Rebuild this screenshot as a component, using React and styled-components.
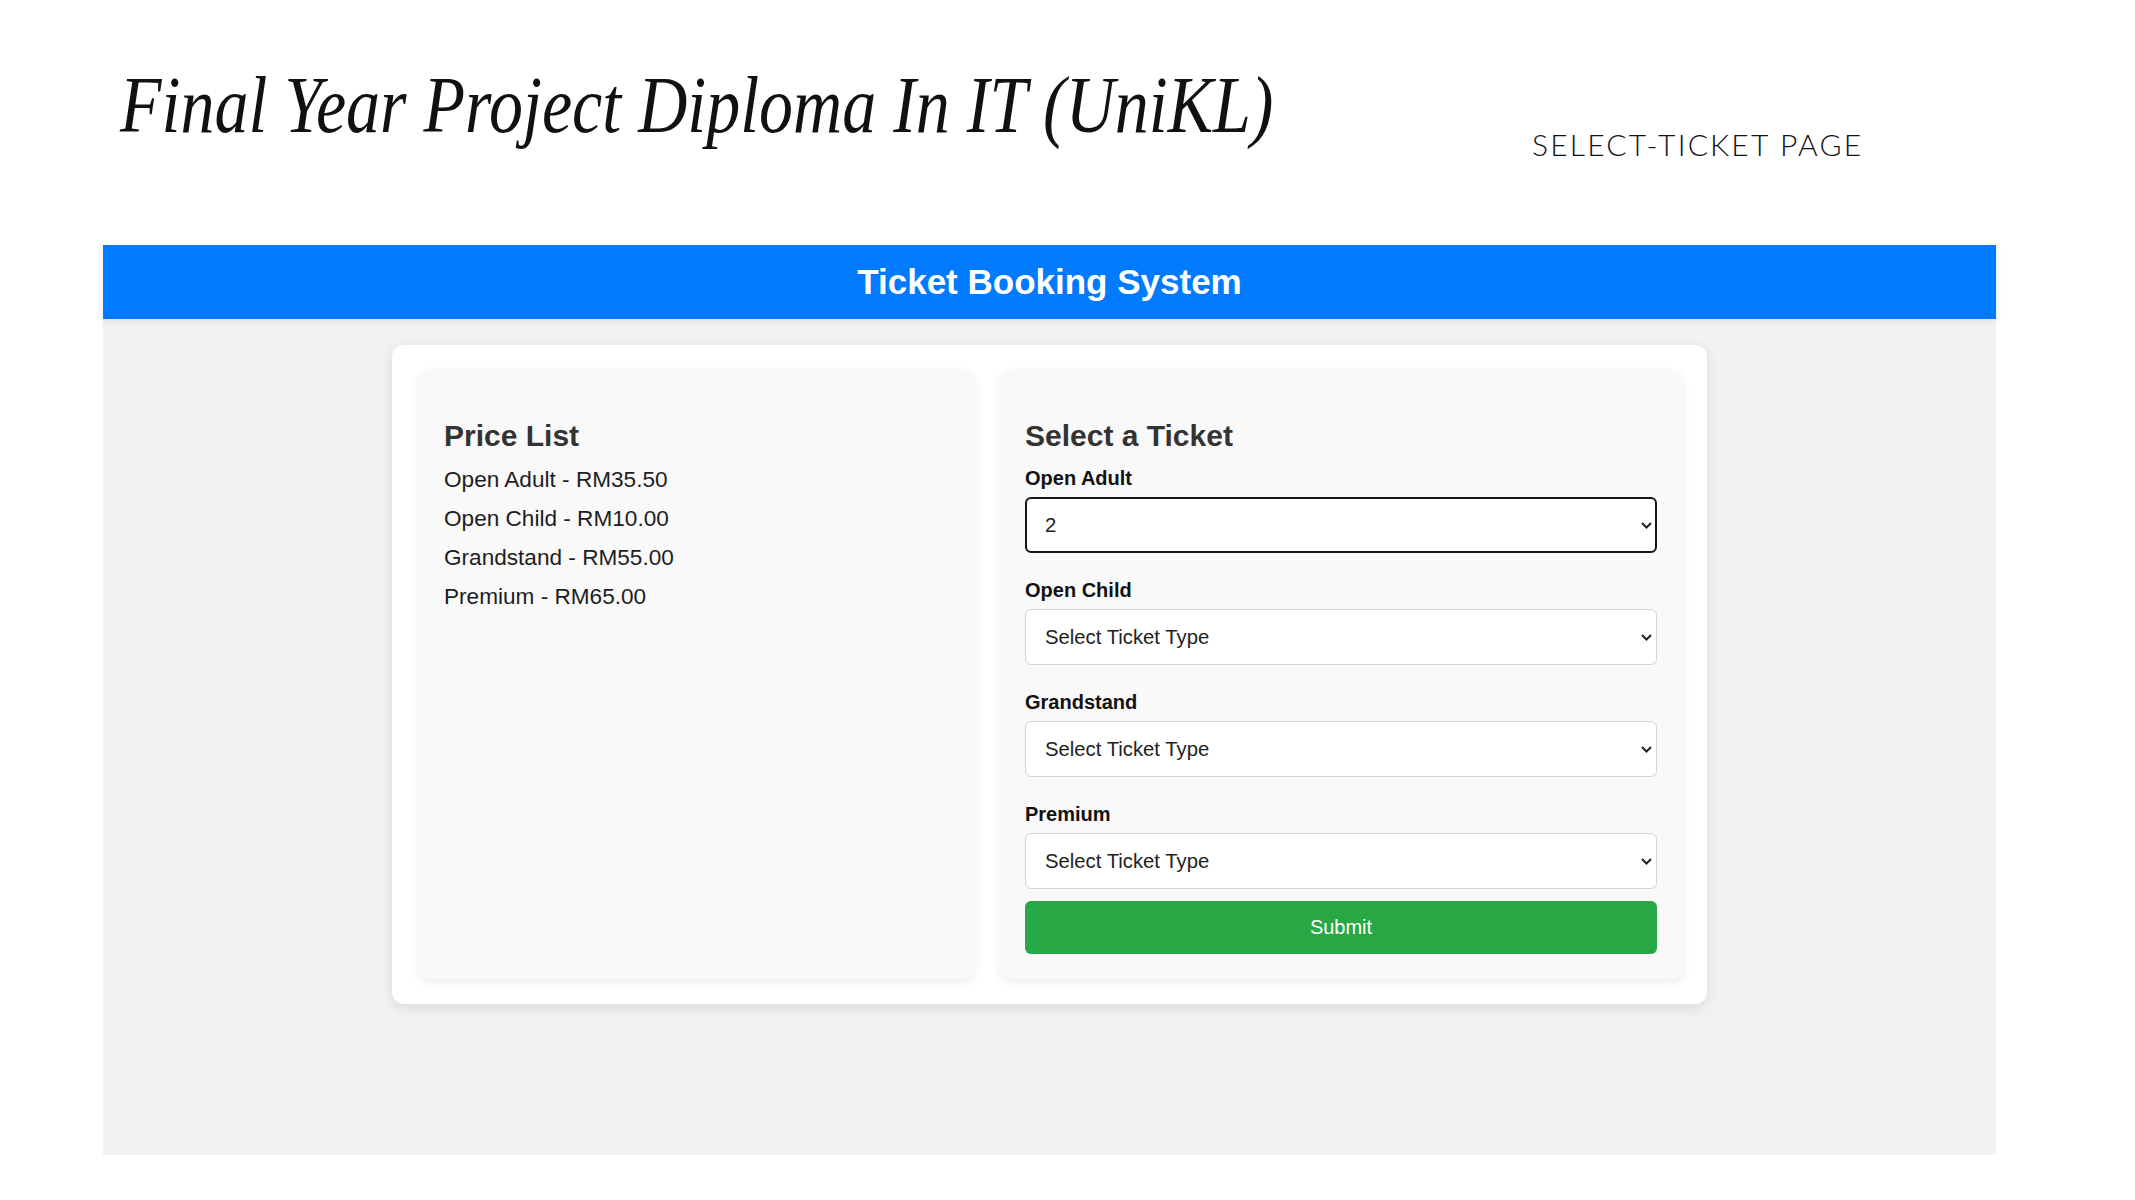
import styled, { createGlobalStyle } from "styled-components";

const GlobalStyle = createGlobalStyle`
    * {
        box-sizing: border-box;
    }

    body {
        margin: 0;
        background-color: #ffffff;
        font-family: "Liberation Sans", Arial, sans-serif;
    }
`;

const Slide = styled.div`
    width: 2135px;
    height: 1200px;
    padding: 0 139px 0 103px;
    display: flex;
    flex-direction: column;
`;

const TitleRow = styled.div`
    display: grid;
    grid-template-columns: 1412px auto;
    padding: 65px 0 0 17px;
    height: 245px;
`;

const Title = styled.h1`
    margin: 0;
    font-family: "Liberation Serif", "Times New Roman", serif;
    font-style: italic;
    font-weight: 400;
    font-size: 80px;
    line-height: 80px;
    color: #111;
    white-space: nowrap;
    transform: scaleX(0.85);
    transform-origin: left center;
`;

const PageName = styled.span`
    margin-top: 64px;
    font-family: Lato, "Open Sans", sans-serif;
    font-weight: 300;
    font-size: 30px;
    line-height: 30px;
    letter-spacing: 2.2px;
    color: #111;
    white-space: nowrap;
`;

const Browser = styled.div`
    flex: 1;
    margin-bottom: 45px;
    background-color: #f2f2f2;
    display: flex;
    flex-direction: column;
`;

const TopBar = styled.header`
    height: 74px;
    background-color: #007bff;
    color: #fff;
    display: flex;
    align-items: center;
    justify-content: center;
    font-size: 35px;
    font-weight: 700;
    box-shadow: 0 2px 8px rgba(0, 0, 0, 0.08);
`;

const Card = styled.div`
    align-self: center;
    margin-top: 26px;
    display: grid;
    grid-template-columns: 557px 684px;
    gap: 24px;
    padding: 25px 24px 25px 26px;
    background-color: #fff;
    border-radius: 12px;
    box-shadow: 0 4px 14px rgba(0, 0, 0, 0.1);
`;

const Panel = styled.section`
    height: 609px;
    padding: 26px 26px 25px;
    background-color: #f9f9f9;
    border-radius: 12px;
    box-shadow: 0 3px 10px rgba(0, 0, 0, 0.08);
    display: flex;
    flex-direction: column;
`;

const PanelTitle = styled.h2`
    margin: 23px 0 0;
    font-size: 30px;
    line-height: 34.5px;
    font-weight: 700;
    color: #333;
`;

const PriceList = styled.ul`
    list-style: none;
    margin: 6px 0 0;
    padding: 0;

    li {
        font-size: 22.6px;
        line-height: 39px;
        color: #1e1e1e;
    }
`;

const Field = styled.div`
    margin-top: ${(p) => (p.$first ? "13px" : "26px")};
    display: flex;
    flex-direction: column;
`;

const Label = styled.label`
    font-size: 20px;
    line-height: 23px;
    font-weight: 700;
    color: #111;
`;

const SelectWrap = styled.div`
    position: relative;
    margin-top: 7px;

    svg {
        position: absolute;
        right: 5px;
        top: 50%;
        margin-top: -3px;
        pointer-events: none;
    }
`;

const Select = styled.select`
    width: 100%;
    height: 56px;
    appearance: none;
    padding: 0 40px 0 ${(p) => (p.$active ? "18px" : "19px")};
    font-family: "Liberation Sans", Arial, sans-serif;
    font-size: 20.3px;
    color: #222;
    background-color: #fff;
    border: ${(p) => (p.$active ? "2px solid #161616" : "1px solid #d4d4d4")};
    border-radius: 6px;
    outline: none;
`;

const SubmitButton = styled.button`
    margin-top: 12px;
    height: 53px;
    width: 100%;
    border: none;
    border-radius: 6px;
    background-color: #28a745;
    color: #fff;
    font-family: "Liberation Sans", Arial, sans-serif;
    font-size: 20px;
`;

const prices = [
    "Open Adult - RM35.50",
    "Open Child - RM10.00",
    "Grandstand - RM55.00",
    "Premium - RM65.00",
];

const fields = [
    { name: "Open Adult", value: "2" },
    { name: "Open Child", value: "" },
    { name: "Grandstand", value: "" },
    { name: "Premium", value: "" },
];

function Chevron() {
    return (
        <svg width="11" height="7" viewBox="0 0 11 7">
            <polyline points="1,1 5.5,5.5 10,1" fill="none" stroke="#222" strokeWidth="2" />
        </svg>
    );
}

export default function App() {
    return (
        <>
            <GlobalStyle />
            <Slide>
                <TitleRow>
                    <Title>Final Year Project Diploma In IT (UniKL)</Title>
                    <PageName>SELECT-TICKET PAGE</PageName>
                </TitleRow>

                <Browser>
                    <TopBar>Ticket Booking System</TopBar>

                    <Card>
                        <Panel>
                            <PanelTitle>Price List</PanelTitle>
                            <PriceList>
                                {prices.map((p) => (
                                    <li key={p}>{p}</li>
                                ))}
                            </PriceList>
                        </Panel>

                        <Panel>
                            <PanelTitle>Select a Ticket</PanelTitle>
                            {fields.map((f, i) => (
                                <Field key={f.name} $first={i === 0}>
                                    <Label>{f.name}</Label>
                                    <SelectWrap>
                                        <Select $active={f.value !== ""} defaultValue={f.value}>
                                            <option value="">Select Ticket Type</option>
                                            <option value="1">1</option>
                                            <option value="2">2</option>
                                            <option value="3">3</option>
                                        </Select>
                                        <Chevron />
                                    </SelectWrap>
                                </Field>
                            ))}
                            <SubmitButton>Submit</SubmitButton>
                        </Panel>
                    </Card>
                </Browser>
            </Slide>
        </>
    );
}
